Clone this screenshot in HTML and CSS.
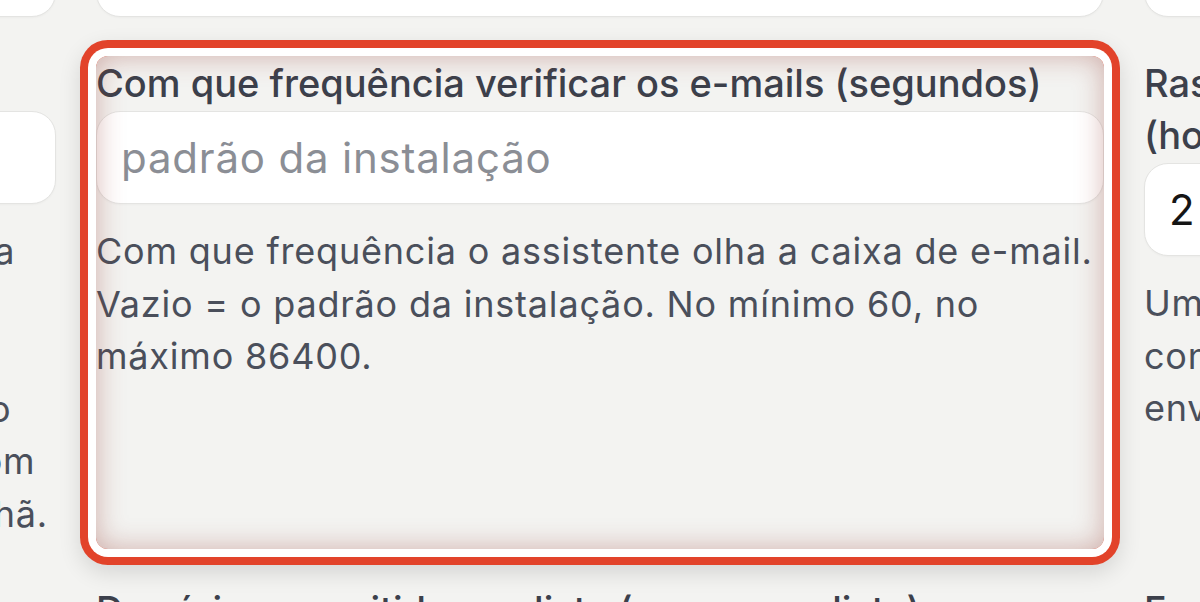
FILE: index.html
```html
<!DOCTYPE html>
<html lang="pt-BR">
<head>
<meta charset="utf-8">
<title>Configurações do assistente</title>
<link rel="stylesheet" href="styles.css">
</head>
<body>
<main class="grid">
  <div class="field">
    <label class="label">Nome exibido nas respostas</label>
    <input class="input" type="text" value="">
  </div>
  <div class="field">
    <label class="label">Endereço de e-mail do assistente</label>
    <input class="input" type="text" value="">
  </div>
  <div class="field">
    <label class="label">Assinatura</label>
    <input class="input" type="text" value="">
  </div>

  <div class="field">
    <label class="label">Atraso antes de responder (minutos)</label>
    <input class="input" type="text" value="">
    <p class="help lines">Quanto tempo o assistente espera, antes de retornar a<br>um novo e-mail que chegou na caixa de entrada.<br>Vazio = responde logo, sem nenhum atraso.<br>Fora do horário de trabalho, as respostas esperam e o<br>envio é retomado no próximo dia útil, sempre junto com<br>a fila, por exemplo, às nove horas da manhã de amanhã.</p>
  </div>
  <div class="field highlight">
    <label class="label">Com que frequência verificar os e-mails (segundos)</label>
    <input class="input" type="text" placeholder="padrão da instalação">
    <p class="help">Com que frequência o assistente olha a caixa de e-mail. Vazio = o padrão da instalação. No mínimo 60, no máximo 86400.</p>
  </div>
  <div class="field">
    <label class="label">Rastrear conversas e lembrar o cliente depois de<br>(horas)</label>
    <input class="input" type="text" value="2">
    <p class="help lines">Um lembrete é enviado ao cliente quando a conversa<br>continua parada por esse número de horas sem novo<br>envio de mensagem. Vazio = desativado.</p>
  </div>

  <div class="field">
    <label class="label">Remetentes bloqueados</label>
    <input class="input" type="text" value="">
  </div>
  <div class="field">
    <label class="label">Domínios permitidos na lista (como uma lista)</label>
    <input class="input" type="text" value="">
  </div>
  <div class="field">
    <label class="label">Fuso horário</label>
    <input class="input" type="text" value="">
  </div>
</main>
</body>
</html>
```
FILE: styles.css
```css
html, body {
  margin: 0;
  padding: 0;
  background: #f3f3f1;
  overflow: hidden;
  font-family: Inter, "Noto Sans", "DejaVu Sans", sans-serif;
}

.grid {
  display: grid;
  grid-template-columns: repeat(3, 1008px);
  column-gap: 40px;
  row-gap: 40px;
  margin: -130px 0 0 -952px;
}

.field {
  display: flex;
  flex-direction: column;
  min-width: 0;
}

.label {
  font-size: 38px;
  line-height: 52px;
  font-weight: 500;
  color: #3c404b;
}

.input {
  margin-top: 2px;
  height: 93px;
  box-sizing: border-box;
  border: 1.5px solid #e4e4e2;
  border-radius: 24px;
  background: #fff;
  padding: 0 24px;
  font-family: Inter, "Noto Sans", sans-serif;
  font-size: 42px;
  letter-spacing: 0.8px;
  color: #151515;
  outline: none;
  box-shadow: 0 1px 2px rgba(0, 0, 0, 0.03);
}

.input::placeholder {
  color: #8b8e95;
}

.help {
  margin: 21px 0 4px;
  font-size: 36px;
  letter-spacing: 0.8px;
  line-height: 52.5px;
  color: #4a4f5b;
}

.lines {
  white-space: nowrap;
}

.highlight {
  position: relative;
}

.highlight::after {
  content: "";
  position: absolute;
  inset: -1px 0 -5px 0;
  border-radius: 12px;
  pointer-events: none;
  box-shadow:
    inset 0 0 28px rgba(150, 60, 50, 0.38),
    0 0 0 8px #ffffff,
    0 0 0 16px #e2432a,
    0 8px 22px 16px rgba(0, 0, 0, 0.12);
}
```
